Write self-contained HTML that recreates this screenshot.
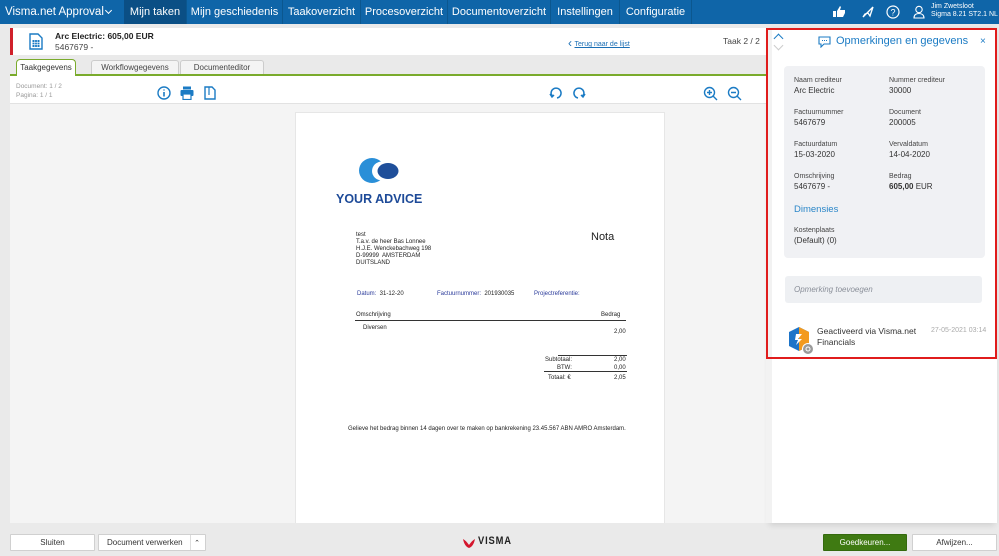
<!DOCTYPE html>
<html><head><meta charset="utf-8"><style>
*{margin:0;padding:0;box-sizing:border-box}
body{width:999px;height:556px;overflow:hidden;background:#eaeaea;font-family:"Liberation Sans",sans-serif;position:relative;color:#333}
.abs{position:absolute}
#nav{left:0;top:0;width:999px;height:24px;background:#0f65a8;color:#fff;font-size:11px}
#nav .it{position:absolute;top:0;height:24px;line-height:24px;text-align:center;border-right:1px solid #0b578f;white-space:nowrap;overflow:hidden}
.doc{font-family:"Liberation Sans",sans-serif;position:absolute;font-size:6px;color:#222;white-space:nowrap}
.lbl{font-size:7px;color:#444}
.val{font-size:8px;color:#333;margin-top:2px}
.btn{position:absolute;top:534px;height:17px;background:#fff;border:1px solid #d0d0d0;font-size:8px;line-height:15px;text-align:center;color:#333;border-radius:1px;white-space:nowrap}
</style></head><body>
<div id="nav" class="abs">
 <div class="abs" style="left:5px;top:0;line-height:24px;font-size:11.5px;white-space:nowrap">Visma.net Approval</div>
 <div class="abs" style="left:106px;top:8px;width:5px;height:5px;border-right:1px solid #fff;border-bottom:1px solid #fff;transform:rotate(45deg)"></div>
 <div class="it" style="left:124px;width:63px;background:#0b4f85">Mijn taken</div>
 <div class="it" style="left:187px;width:96px">Mijn geschiedenis</div>
 <div class="it" style="left:283px;width:78px">Taakoverzicht</div>
 <div class="it" style="left:361px;width:87px">Procesoverzicht</div>
 <div class="it" style="left:448px;width:103px">Documentoverzicht</div>
 <div class="it" style="left:551px;width:69px">Instellingen</div>
 <div class="it" style="left:620px;width:72px">Configuratie</div>
 <svg class="abs" style="left:832px;top:5px" width="14" height="14" viewBox="0 0 14 14"><path d="M1 6h3v6H1zM5 6l3-5 1 1-1 3h5v3l-2 4H5z" fill="#fff"/></svg>
 <svg class="abs" style="left:861px;top:5px" width="14" height="14" viewBox="0 0 14 14" fill="none" stroke="#fff" stroke-width="1.3"><path d="M2 12L12 2 9 11 7 8 4 9zM2 12l2-3"/></svg>
 <svg class="abs" style="left:886px;top:5px" width="14" height="14" viewBox="0 0 14 14"><circle cx="7" cy="7" r="6" fill="none" stroke="#fff" stroke-width="1.2"/><text x="7" y="10.5" font-size="9" fill="#fff" text-anchor="middle" font-family="Liberation Sans">?</text></svg>
 <svg class="abs" style="left:913px;top:5px" width="12" height="14" viewBox="0 0 12 14" fill="none" stroke="#fff" stroke-width="1.1"><circle cx="6" cy="4.5" r="3.2"/><path d="M1 13c0-3 2-4.5 5-4.5s5 1.5 5 4.5z"/></svg>
 <div class="abs" style="left:931px;top:3px;font-size:7px;line-height:8px;white-space:nowrap">Jim Zwetsloot<br>Sigma 8.21 ST2.1 NL</div>
</div>
<div class="abs" style="left:10px;top:28px;width:760px;height:27px;background:#fff"></div>
<div class="abs" style="left:10px;top:28px;width:3px;height:27px;background:#d0202a"></div>
<svg class="abs" style="left:29px;top:33px" width="14" height="17" viewBox="0 0 14 17"><path d="M1 1h8l4 4v11H1z" fill="none" stroke="#1b7bc4" stroke-width="1.4"/><rect x="3.5" y="7" width="7" height="7" fill="#1b7bc4"/><path d="M3.5 9.3h7M3.5 11.6h7M5.8 7v7M8.2 7v7" stroke="#fff" stroke-width=".6"/></svg>
<div class="abs" style="left:55px;top:31px;font-size:8.5px;font-weight:bold;color:#222">Arc Electric: 605,00 EUR</div>
<div class="abs" style="left:55px;top:42px;font-size:8.5px;color:#444">5467679 -</div>
<div class="abs" style="left:568px;top:35px;font-size:9px;color:#1b6fb5;white-space:nowrap"><span style="font-size:12px;position:relative;top:1px">&#8249;</span> <span style="text-decoration:underline;font-size:7px">Terug naar de lijst</span></div>
<div class="abs" style="left:723px;top:36px;font-size:8.5px;color:#444">Taak 2 / 2</div>
<div class="abs" style="left:10px;top:74px;width:760px;height:2px;background:#7aab2c"></div>
<div class="abs" style="left:16px;top:59px;width:60px;height:17px;background:#fff;border:1px solid #7aab2c;border-bottom:none;border-radius:4px 4px 0 0;font-size:8px;text-align:center;line-height:15px">Taakgegevens</div>
<div class="abs" style="left:91px;top:60px;width:88px;height:14px;background:#f4f4f4;border:1px solid #ccc;border-bottom:none;border-radius:3px 3px 0 0;font-size:8px;text-align:center;line-height:13px;color:#444">Workflowgegevens</div>
<div class="abs" style="left:180px;top:60px;width:84px;height:14px;background:#f4f4f4;border:1px solid #ccc;border-bottom:none;border-radius:3px 3px 0 0;font-size:8px;text-align:center;line-height:13px;color:#444">Documenteditor</div>
<div class="abs" style="left:10px;top:76px;width:760px;height:27px;background:#fff"></div>
<div class="abs" style="left:16px;top:82px;font-size:6.5px;color:#999;line-height:9px">Document: 1 / 2<br>Pagina: 1 / 1</div>
<svg class="abs" style="left:157px;top:86px" width="14" height="14" viewBox="0 0 14 14"><circle cx="7" cy="7" r="6" fill="none" stroke="#1b7bc4" stroke-width="1.4"/><path d="M7 6v4.5M7 3.5v1" stroke="#1b7bc4" stroke-width="1.6"/></svg>
<svg class="abs" style="left:180px;top:86px" width="14" height="14" viewBox="0 0 14 14" fill="#1b7bc4"><rect x="3" y="0.5" width="8" height="3"/><rect x="0.5" y="4" width="13" height="6" rx="1"/><rect x="3" y="8" width="8" height="5.5" fill="#fff" stroke="#1b7bc4" stroke-width="1.2"/></svg>
<svg class="abs" style="left:204px;top:86px" width="12" height="14" viewBox="0 0 12 14" fill="none" stroke="#1b7bc4" stroke-width="1.4"><path d="M1 1h7l3 3v9H1z"/><path d="M5 1v8" stroke-width="1.2"/></svg>
<svg class="abs" style="left:549px;top:86px" width="14" height="14" viewBox="0 0 14 14" fill="none" stroke="#1b7bc4" stroke-width="1.5"><path d="M3 10A5 5 0 1 1 8 12"/><path d="M1 8l2 3 2-2" fill="#1b7bc4"/></svg>
<svg class="abs" style="left:572px;top:86px" width="14" height="14" viewBox="0 0 14 14" fill="none" stroke="#1b7bc4" stroke-width="1.5"><path d="M11 10A5 5 0 1 0 6 12"/><path d="M13 8l-2 3-2-2" fill="#1b7bc4"/></svg>
<svg class="abs" style="left:703px;top:86px" width="15" height="15" viewBox="0 0 15 15" fill="none" stroke="#1b7bc4" stroke-width="1.4"><circle cx="6.5" cy="6.5" r="5"/><path d="M10 10l4 4M4 6.5h5M6.5 4v5"/></svg>
<svg class="abs" style="left:727px;top:86px" width="15" height="15" viewBox="0 0 15 15" fill="none" stroke="#1b7bc4" stroke-width="1.4"><circle cx="6.5" cy="6.5" r="5"/><path d="M10 10l4 4M4 6.5h5"/></svg>
<div class="abs" style="left:10px;top:103px;width:760px;height:420px;background:#f4f4f4;border-top:1px solid #e2e2e2"></div>
<div class="abs" style="left:295px;top:112px;width:370px;height:411px;background:#fff;border:1px solid #e6e6e6;border-bottom:none"></div>
<svg class="abs" style="left:358px;top:157px" width="46" height="28" viewBox="0 0 46 28"><ellipse cx="14" cy="13.5" rx="13" ry="12.5" fill="#2a8fd8"/><ellipse cx="24" cy="14" rx="10" ry="9.5" fill="#fff"/><ellipse cx="30" cy="14" rx="10.5" ry="8" fill="#1f4f9a"/></svg>
<div class="abs" style="left:336px;top:192px;font-size:12.5px;font-weight:bold;color:#1d4a98;white-space:nowrap">YOUR ADVICE</div>
<div class="doc" style="left:356px;top:232px;line-height:7px">test<br>T.a.v. de heer Bas Lonnee<br>H.J.E. Wenckebachweg 198<br>D-99999&nbsp; AMSTERDAM<br>DUITSLAND</div>
<div class="doc" style="left:591px;top:231px;font-size:11px">Nota</div>
<div class="doc" style="left:357px;top:291px"><span style="color:#2a3a9a">Datum:</span>&nbsp; 31-12-20</div>
<div class="doc" style="left:437px;top:291px"><span style="color:#2a3a9a">Factuurnummer:</span>&nbsp; 201930035</div>
<div class="doc" style="left:534px;top:291px;color:#2a3a9a">Projectreferentie:</div>
<div class="doc" style="left:356px;top:312px">Omschrijving</div>
<div class="doc" style="left:601px;top:312px">Bedrag</div>
<div class="abs" style="left:355px;top:320px;width:271px;height:1px;background:#333"></div>
<div class="doc" style="left:363px;top:325px">Diversen</div>
<div class="doc" style="left:614px;top:329px">2,00</div>
<div class="abs" style="left:558px;top:355px;width:69px;height:1px;background:#333"></div>
<div class="doc" style="left:545px;top:357px">Subtotaal:</div><div class="doc" style="left:614px;top:357px">2,00</div>
<div class="doc" style="left:557px;top:365px">BTW:</div><div class="doc" style="left:614px;top:365px">0,00</div>
<div class="abs" style="left:544px;top:371px;width:83px;height:1px;background:#333"></div>
<div class="doc" style="left:548px;top:375px">Totaal: €</div><div class="doc" style="left:614px;top:375px">2,05</div>
<div class="doc" style="left:348px;top:426px">Gelieve het bedrag binnen 14 dagen over te maken op bankrekening 23.45.567 ABN AMRO Amsterdam.</div>
<div class="abs" style="left:771px;top:28px;width:226px;height:495px;background:#fff;box-shadow:-2px 2px 6px rgba(0,0,0,.12)"></div>
<div class="abs" style="left:766px;top:28px;width:6px;height:495px;background:#f2f2f2"></div>
<div class="abs" style="left:766px;top:28px;width:231px;height:331px;border:2px solid #e01c1c"></div>
<div class="abs" style="left:775px;top:35px;width:7px;height:7px;border-left:1.5px solid #1b7bc4;border-top:1.5px solid #1b7bc4;transform:rotate(45deg)"></div>
<div class="abs" style="left:775px;top:42px;width:7px;height:7px;border-right:1px solid #ccc;border-bottom:1px solid #ccc;transform:rotate(45deg)"></div>
<svg class="abs" style="left:818px;top:36px" width="13" height="12" viewBox="0 0 13 12"><path d="M1 1h11v7H6l-3 3V8H1z" fill="none" stroke="#1b7bc4" stroke-width="1.1"/><path d="M4 4.5h1M6 4.5h1M8 4.5h1" stroke="#1b7bc4"/></svg>
<div class="abs" style="left:836px;top:35px;font-size:11px;color:#1b7bc4;white-space:nowrap">Opmerkingen en gegevens</div>
<div class="abs" style="left:980px;top:36px;font-size:10px;color:#1b7bc4">×</div>
<div class="abs" style="left:784px;top:66px;width:201px;height:192px;background:#f0f1f4;border-radius:4px"></div>
<div class="abs" style="left:794px;top:77px"><div class="lbl">Naam crediteur</div><div class="val">Arc Electric</div></div>
<div class="abs" style="left:889px;top:77px"><div class="lbl">Nummer crediteur</div><div class="val">30000</div></div>
<div class="abs" style="left:794px;top:109px"><div class="lbl">Factuurnummer</div><div class="val">5467679</div></div>
<div class="abs" style="left:889px;top:109px"><div class="lbl">Document</div><div class="val">200005</div></div>
<div class="abs" style="left:794px;top:141px"><div class="lbl">Factuurdatum</div><div class="val">15-03-2020</div></div>
<div class="abs" style="left:889px;top:141px"><div class="lbl">Vervaldatum</div><div class="val">14-04-2020</div></div>
<div class="abs" style="left:794px;top:173px"><div class="lbl">Omschrijving</div><div class="val">5467679 -</div></div>
<div class="abs" style="left:889px;top:173px"><div class="lbl">Bedrag</div><div class="val"><b>605,00</b> EUR</div></div>
<div class="abs" style="left:794px;top:204px;font-size:9.5px;color:#2a86c8">Dimensies</div>
<div class="abs" style="left:794px;top:227px"><div class="lbl">Kostenplaats</div><div class="val">(Default) (0)</div></div>
<div class="abs" style="left:785px;top:276px;width:197px;height:27px;background:#eef0f3;border-radius:3px;font-size:8px;font-style:italic;color:#8a8f99;line-height:27px;padding-left:9px">Opmerking toevoegen</div>
<svg class="abs" style="left:787px;top:326px" width="28" height="30" viewBox="0 0 28 30"><path d="M2 6l10-5 10 5v14l-10 5-10-5z" fill="#1d74c8"/><path d="M12 1l10 5v14l-10 5z" fill="#f39a1e"/><path d="M9 8h6l-4 5h4l-6 6 2-5H8z" fill="#fff"/><circle cx="21" cy="23" r="5.5" fill="#9a9a9a" stroke="#fff"/><circle cx="21" cy="23" r="2" fill="none" stroke="#fff"/></svg>
<div class="abs" style="left:817px;top:326px;font-size:8.5px;color:#333;line-height:11px;white-space:nowrap">Geactiveerd via Visma.net<br>Financials</div>
<div class="abs" style="left:931px;top:327px;font-size:7px;color:#aaa;white-space:nowrap">27-05-2021 03:14</div>
<div class="btn" style="left:10px;width:85px">Sluiten</div>
<div class="btn" style="left:98px;width:108px;text-align:left;padding-left:8px">Document verwerken <span style="position:absolute;right:5px;top:1px;font-size:7px">&#8963;</span></div>
<div class="abs" style="left:190px;top:535px;width:1px;height:15px;background:#ddd"></div>
<svg class="abs" style="left:462px;top:537px" width="14" height="12" viewBox="0 0 14 12"><path d="M1 2c1 5 3 8 6 9 3-1 5-4 6-9-2 1-4 3-6 6C5 5 3 3 1 2z" fill="#d4172e"/></svg>
<div class="abs" style="left:478px;top:535px;font-size:11px;font-weight:bold;color:#222;letter-spacing:1px;transform:scaleX(.85);transform-origin:left">VISMA</div>
<div class="btn" style="left:823px;width:84px;background:#3f7a12;border-color:#356a0e;color:#fff">Goedkeuren...</div>
<div class="btn" style="left:912px;width:85px">Afwijzen...</div>
</body></html>
